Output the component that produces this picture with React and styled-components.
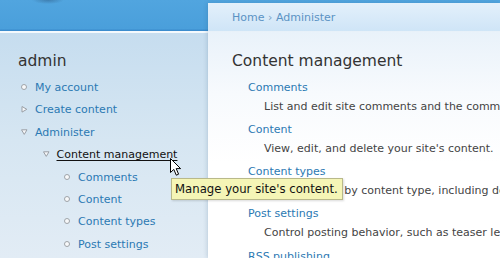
import React from 'react'
import styled, { createGlobalStyle } from 'styled-components'

const GlobalStyle = createGlobalStyle`
  html, body {
    margin: 0;
    padding: 0;
    width: 500px;
    height: 258px;
    overflow: hidden;
  }
  body {
    font-family: "DejaVu Sans", Verdana, sans-serif;
  }
`

const menuData = [
  { title: 'My account', level: 1, kind: 'leaf' },
  { title: 'Create content', level: 1, kind: 'collapsed' },
  { title: 'Administer', level: 1, kind: 'expanded' },
  { title: 'Content management', level: 2, kind: 'expanded', active: true },
  { title: 'Comments', level: 3, kind: 'leaf' },
  { title: 'Content', level: 3, kind: 'leaf' },
  { title: 'Content types', level: 3, kind: 'leaf' },
  { title: 'Post settings', level: 3, kind: 'leaf' },
]

const adminData = [
  { title: 'Comments', desc: 'List and edit site comments and the comment moderation queue.' },
  { title: 'Content', desc: "View, edit, and delete your site's content." },
  { title: 'Content types', desc: 'Manage posts by content type, including default status, front page promotion, etc.' },
  { title: 'Post settings', desc: 'Control posting behavior, such as teaser length, requiring previews before posting, and the number of posts on the front page.' },
  { title: 'RSS publishing', desc: 'Configure the number of items per feed and whether feeds should be titles/teasers/full-text.' },
]

const Bullet = ({ kind }) => {
  if (kind === 'leaf') {
    return (
      <BulletBox>
        <svg width="7" height="7" viewBox="0 0 7 7">
          <circle cx="3" cy="3" r="2.5" fill="#f8f9fa" stroke="#9ea3a8" strokeWidth="1" />
        </svg>
      </BulletBox>
    )
  }
  if (kind === 'collapsed') {
    return (
      <BulletBox>
        <svg width="7" height="7" viewBox="0 0 7 7">
          <path d="M1 0.5 L5.8 3.3 L1 6.1 Z" fill="#f6f7f9" stroke="#9a9fa5" strokeWidth="1" strokeLinejoin="round" />
        </svg>
      </BulletBox>
    )
  }
  return (
    <BulletBox>
      <svg width="7" height="7" viewBox="0 0 7 7">
        <path d="M0.5 0.8 L6 0.8 L3.25 5.4 Z" fill="#f6f7f9" stroke="#9a9fa5" strokeWidth="1" strokeLinejoin="round" />
      </svg>
    </BulletBox>
  )
}

const App = () => {
  return (
    <Page>
      <GlobalStyle />
      <Sidebar>
        <SideTitle>admin</SideTitle>
        <Menu>
          {menuData.map((item, i) => (
            <MenuItem key={i} level={item.level}>
              <Bullet kind={item.kind} />
              <MenuLink active={item.active}>{item.title}</MenuLink>
            </MenuItem>
          ))}
        </Menu>
      </Sidebar>
      <Main>
        <Breadcrumb>
          <Crumb>Home</Crumb> › <Crumb>Administer</Crumb>
        </Breadcrumb>
        <Body>
          <Title>Content management</Title>
          <AdminList>
            {adminData.map((item, i) => (
              <AdminItem key={i}>
                <AdminLink>{item.title}</AdminLink>
                <AdminDesc>{item.desc}</AdminDesc>
              </AdminItem>
            ))}
          </AdminList>
        </Body>
      </Main>
      <Tooltip>Manage your site's content.</Tooltip>
      <Cursor width="13" height="19" viewBox="0 0 13 19">
        <path
          d="M0.5 0.5 L0.5 14.5 L3.8 11.4 L6.3 17.2 L8.6 16.2 L6.2 10.6 L10.6 10.6 Z"
          fill="#fff"
          stroke="#000"
          strokeWidth="1"
          strokeLinejoin="miter"
        />
      </Cursor>
    </Page>
  )
}

export default App

const Page = styled.div`
  position: relative;
  display: flex;
  width: 500px;
  height: 258px;
  overflow: hidden;
  background:
    radial-gradient(ellipse 16px 4px at 48px 0, rgba(40, 80, 120, 0.45), rgba(40, 80, 120, 0) 100%) no-repeat,
    linear-gradient(
      to bottom,
      #51a5df 0,
      #4a9fdb 29px,
      #3b8ccd 30px,
      #3b8ccd 31px,
      #f4f9fd 31px,
      #f4f9fd 33px,
      #c6ddef 33px,
      #d6e6f2 140px,
      #e2ecf5 258px
    );
`

const Sidebar = styled.aside`
  width: 208px;
  flex-shrink: 0;
  padding: 51px 0 0 18px;
  box-sizing: border-box;
`

const SideTitle = styled.h2`
  margin: 0;
  font-size: 15.5px;
  line-height: 20px;
  font-weight: normal;
  color: #333;
`

const Menu = styled.ul`
  list-style: none;
  margin: 6px 0 0;
  padding: 0;
`

const MenuItem = styled.li`
  display: flex;
  align-items: flex-start;
  height: 22.4px;
  margin-left: ${({ level }) => 3 + (level - 1) * 21.5}px;
  font-size: 11px;
  line-height: 22px;
  white-space: nowrap;
`

const BulletBox = styled.span`
  display: flex;
  width: 14px;
  flex-shrink: 0;
  padding-top: 7px;
`

const MenuLink = styled.span`
  color: ${({ active }) => (active ? '#111' : '#2b79b3')};
  text-decoration: ${({ active }) => (active ? 'underline' : 'none')};
  text-underline-offset: 2px;
`

const Main = styled.main`
  flex: 1;
  min-width: 0;
  margin-top: 3px;
  display: flex;
  flex-direction: column;
  box-shadow: -1px 0 4px rgba(30, 70, 110, 0.18);
  background: linear-gradient(to bottom, #e9f2fa 29px, #f7fafd 90px, #ffffff 160px);
`

const Breadcrumb = styled.div`
  height: 29px;
  flex-shrink: 0;
  padding-left: 24px;
  font-size: 11px;
  line-height: 30px;
  color: #7aa3c8;
  white-space: nowrap;
  background: linear-gradient(to bottom, #e3f0fb, #cfe5f7);
  border-bottom: 1px solid #e8f1f9;
  box-sizing: border-box;
`

const Crumb = styled.span`
  color: #5b93c4;
`

const Body = styled.div`
  padding: 19px 0 0 24px;
  white-space: nowrap;
  overflow: hidden;
`

const Title = styled.h1`
  margin: 0;
  font-size: 15.5px;
  line-height: 20px;
  font-weight: normal;
  color: #333;
`

const AdminList = styled.dl`
  margin: 6.5px 0 0;
  padding-left: 16px;
`

const AdminItem = styled.div`
  margin-bottom: 4.3px;
`

const AdminLink = styled.dt`
  font-size: 11px;
  line-height: 19px;
  color: #2b79b3;
`

const AdminDesc = styled.dd`
  margin: 0 0 0 16px;
  font-size: 11px;
  line-height: 19px;
  color: #444;
`

const Tooltip = styled.div`
  position: absolute;
  left: 171px;
  top: 178px;
  height: 22px;
  padding: 0 4px 0 3px;
  font-size: 11.7px;
  line-height: 21px;
  color: #111;
  white-space: nowrap;
  background: #f5f5b6;
  border: 1px solid #b9b98a;
  box-sizing: border-box;
  box-shadow: 1px 1px 2px rgba(0, 0, 0, 0.15);
`

const Cursor = styled.svg`
  position: absolute;
  left: 170px;
  top: 158px;
`
